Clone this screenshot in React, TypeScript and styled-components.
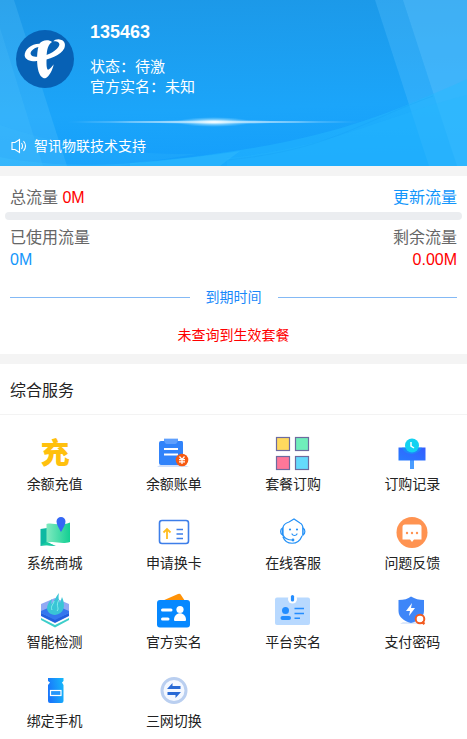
import React from "react";
import styled, { createGlobalStyle } from "styled-components";

const GlobalStyle = createGlobalStyle`
  * { box-sizing: border-box; }
  body {
    margin: 0;
    background: #fff;
    color: #222;
    font-family: "Liberation Sans", "Noto Sans CJK SC", sans-serif;
    font-size: 14px;
    line-height: 20px;
  }
  button {
    border: 0;
    padding: 0;
    background: none;
    color: inherit;
    font: inherit;
    cursor: pointer;
  }
  h1, h2, p { margin: 0; }
`;

const Page = styled.main`
  overflow-x: hidden;
`;

const Header = styled.header`
  position: relative;
  display: flex;
  flex-direction: column;
  gap: 39px;
  padding: 22px 16px 10px 11px;
  color: #fff;
  background: #1b9ff2;
`;

const Backdrop = styled.svg`
  position: absolute;
  inset: 0;
  width: 100%;
  height: 100%;
`;

const Profile = styled.section`
  position: relative;
  display: flex;
  align-items: flex-start;
  gap: 16px;
  padding-left: 5px;
`;

const CarrierLogo = styled.svg`
  width: 58px;
  height: 58px;
  flex: none;
  margin-top: 8px;
`;

const CardNumber = styled.h1`
  margin-bottom: 15px;
  font-size: 18px;
  line-height: 20px;
`;

const StatusLine = styled.p`
  font-size: 15px;
  line-height: 20px;
`;

const Notice = styled.p`
  position: relative;
  display: flex;
  align-items: center;
  gap: 7px;
`;

const Panel = styled.section`
  border-top: 10px solid #f4f4f4;
`;

const Usage = styled.div`
  padding: 11px 5px 9px;
`;

const UsageRow = styled.div`
  display: flex;
  justify-content: space-between;
  padding: 0 5px;
  color: #666;
  font-size: 16px;
  line-height: 22px;
`;

const Amount = styled.span<{ $tone: "red" | "blue" }>`
  color: ${(p) => (p.$tone === "red" ? "#ff0000" : "#1296fb")};
`;

const RefreshButton = styled.button`
  color: #1296fb;
`;

const Track = styled.div`
  height: 8px;
  margin: 3px 0 7px;
  border-radius: 4px;
  background: #ebedf0;
`;

const Divider = styled.div`
  display: flex;
  align-items: center;
  gap: 16px;
  margin: 16px 5px 18px;
  color: #1989fa;

  &::before,
  &::after {
    content: "";
    flex: 1;
    height: 1px;
    background: #84b9f5;
  }
`;

const EmptyPlan = styled.p`
  color: #ff0000;
  text-align: center;
`;

const PanelTitle = styled.h2`
  padding: 16px 10px 12px;
  border-bottom: 1px solid #f3f3f3;
  font-size: 16px;
  font-weight: 400;
  line-height: 22px;
`;

const ServiceGrid = styled.div`
  display: grid;
  grid-template-columns: repeat(4, 1fr);
  row-gap: 20px;
  margin: 0 -5px;
  padding: 20px 0 8px;
`;

const ServiceButton = styled.button`
  display: flex;
  flex-direction: column;
  align-items: center;
  gap: 3px;
`;

const Icon = styled.svg`
  width: 36px;
  height: 36px;
  overflow: visible;
`;

const services: { label: string; art: React.ReactNode }[] = [
  {
    label: "余额充值",
    art: (
      <text x="18" y="29" textAnchor="middle" fontSize="29" fontWeight="900" fill="#ffc00d" fontFamily="Noto Sans CJK SC, sans-serif">
        充
      </text>
    ),
  },
  {
    label: "余额账单",
    art: (
      <>
        <path d="M4 30H28L33 32H1Z" fill="#cfdffa" />
        <path d="M5 6H8V4H22V6H26Q27 6 27 8V30H5Q3 30 3 28V8Q3 6 5 6Z" fill="#3183fa" />
        <path d="M8 5C9 10 11 9 15 9S21 10 22 5V3H8Z" fill="#8cbcff" opacity=".5" />
        <path d="M8 14H22M8 19.5H22" stroke="#fff" strokeWidth="2" />
        <circle cx="26" cy="25" r="6.3" fill="#f65a13" />
        <path d="M23.5 21.5 26 24.5 28.5 21.5M23 24.7H29M23 26.8H29M26 24.5V29" fill="none" stroke="#fff" strokeWidth="1.2" />
      </>
    ),
  },
  {
    label: "套餐订购",
    art: (
      <g stroke="#6d6b9f" strokeWidth="1.2">
        <rect x="1.5" y="2.5" width="13" height="13" fill="#ffda5e" />
        <rect x="20.5" y="2.5" width="13" height="13" fill="#70eebb" />
        <rect x="1.5" y="21.5" width="13" height="13" fill="#ff7799" />
        <rect x="20.5" y="21.5" width="13" height="13" fill="#64dafc" />
      </g>
    ),
  },
  {
    label: "订购记录",
    art: (
      <>
        <defs>
          <linearGradient id="board" x1="0" y1="1" x2="1" y2="0">
            <stop stopColor="#267cff" />
            <stop offset="1" stopColor="#365dff" />
          </linearGradient>
        </defs>
        <path d="M16 25H20V34H16Z" fill="#4a9cff" />
        <path d="M4.5 12.5H31.5V25.5H4.5Z" fill="url(#board)" />
        <path d="M8 12.5H28C27 16 22 19 18 19S9 17 8 12.5Z" fill="#1598f7" opacity=".6" />
        <circle cx="18" cy="10.5" r="7" fill="#13d2f1" />
        <path d="M17 7V11L20 13" fill="none" stroke="#fff" strokeWidth="1.5" />
      </>
    ),
  },
  {
    label: "系统商城",
    art: (
      <>
        <defs>
          <linearGradient id="mapFront">
            <stop stopColor="#80eac0" />
            <stop offset="1" stopColor="#13cf93" />
          </linearGradient>
        </defs>
        <path d="M3.5 15 10 14V28L18 32 10 31 3.5 32Z" fill="#0db9a2" />
        <path d="M9.5 10C16 8 22 13 33 8.5V28C23 31 18 26 9.5 29Z" fill="url(#mapFront)" />
        <path d="M9.5 28 19 32 4 31Z" fill="#18cba0" />
        <path d="M24 18C22 14 19.5 11 19.5 7.5A4.5 4.5 0 0 1 28.5 7.5C28.5 11 26 14 24 18Z" fill="#3567f5" />
      </>
    ),
  },
  {
    label: "申请换卡",
    art: (
      <>
        <rect x="3.5" y="6.5" width="29" height="23" rx="2.5" fill="#fff" stroke="#3d7ee9" strokeWidth="1.6" />
        <path d="M11 25V15M7.5 18.5 11 15 14.500 18.5" fill="none" stroke="#ffbd20" strokeWidth="1.8" />
        <path d="M20.5 15.5H27M20.5 20H27M20.5 24.5H27" stroke="#3d7ee9" strokeWidth="1.6" />
      </>
    ),
  },
  {
    label: "在线客服",
    art: (
      <g fill="none" stroke="#2491f7" strokeWidth="1.2" strokeLinecap="round">
        <path d="M8 14C8 11 11 9 14 8L19 5 25 9C27 10 28 12 28 15V21M8 14V21" />
        <path d="M7.500 14C5 15 5 20 7.5 21ZM28 14C30.5 15 30.5 20 28 21Z" fill="#d9edff" />
        <path d="M8 23C11 31 23 32 27 22M8 21C10 25 14 26 17 26" />
        <path d="M17 20C18 22 21 22 22 20" />
        <circle cx="15" cy="15.5" r=".5" fill="#2491f7" />
        <circle cx="22" cy="15.5" r=".5" fill="#2491f7" />
        <circle cx="18" cy="26" r=".8" fill="#2491f7" />
      </g>
    ),
  },
  {
    label: "问题反馈",
    art: (
      <>
        <circle cx="18" cy="18.5" r="15.5" fill="#ff9351" />
        <path d="M11 10.5H25Q27.5 10.5 27.5 13V25.5H20L18 28 16 25.5H8.5V13Q8.5 10.5 11 10.5Z" fill="#fff" />
        <g fill="#ff9351">
          <circle cx="13" cy="19" r="1.2" />
          <circle cx="18" cy="19" r="1.2" />
          <circle cx="23" cy="19" r="1.2" />
        </g>
      </>
    ),
  },
  {
    label: "智能检测",
    art: (
      <>
        <path d="M4 25 18 32 32 25V27L18 34.5 4 27Z" fill="#3dceca" />
        <path d="M4 19H32V23L18 30 4 23Z" fill="#2360de" />
        <path d="M4 11 18 5 32 11V20L18 26 4 20Z" fill="#92a9f3" />
        <path d="M4 18 18 12 32 18V20L18 27 4 20Z" fill="#3577ee" />
        <path d="M18 22C8 21 8 12 15 6L14 11C17 9 18 5 22 0C21 5 22 7 23 10L25 4C29 13 27 21 18 22Z" fill="#39c5d6" />
        <path d="M15 17C13 13 17 11 17 8M20 18C23 15 18 13 22 7" fill="none" stroke="#87edec" strokeWidth="1" />
      </>
    ),
  },
  {
    label: "官方实名",
    art: (
      <>
        <path d="M6 8 22 1Q24 0 25 2L29 8Z" fill="#ff9207" />
        <rect x="1" y="7" width="33" height="27.5" rx="3" fill="#0688ff" />
        <path d="M6.5 17H15M6.5 26H12" stroke="#fff" strokeWidth="3" strokeLinecap="round" />
        <circle cx="24" cy="16.5" r="3.6" fill="#fff" />
        <path d="M18 27C18 18 30 18 30 27Q30 28 29 28H19Q18 28 18 27Z" fill="#fff" />
      </>
    ),
  },
  {
    label: "平台实名",
    art: (
      <>
        <rect x="0" y="4.5" width="35" height="27.5" rx="2" fill="#b8d9ff" />
        <circle cx="17.5" cy="6" r="4.5" fill="#fff" />
        <path d="M17.5 3.5V7" stroke="#238dff" strokeWidth="3.2" strokeLinecap="round" />
        <circle cx="10.5" cy="17.5" r="3.5" fill="#238dff" />
        <rect x="5.5" y="23" width="10.5" height="4" rx="2" fill="#238dff" />
        <path d="M19.5 15.5H29M19.5 20.5H29M19.5 25.3H25" stroke="#238dff" strokeWidth="1.6" />
      </>
    ),
  },
  {
    label: "支付密码",
    art: (
      <>
        <path d="M9 29H21L26 31H6Z" fill="#dce8fb" />
        <path d="M4.5 7C10 7 14 6 17 3.5C21 6 25 7 30 7V18C30 24 24 28 17 30C10 28 4.5 24 4.5 18Z" fill="#3e86f8" />
        <path d="M18 10 12 18H16L15 23 21 15H17Z" fill="#fff" />
        <circle cx="26" cy="26" r="4.3" fill="#fff" stroke="#f25b20" strokeWidth="2" />
        <path d="M28 29 30.5 31" stroke="#f25b20" strokeWidth="2.5" />
      </>
    ),
  },
  {
    label: "绑定手机",
    art: (
      <>
        <defs>
          <linearGradient id="phone" x1="0" y1="0.3" x2="1" y2="0">
            <stop stopColor="#1978fb" />
            <stop offset="1" stopColor="#16bafa" />
          </linearGradient>
        </defs>
        <path d="M11 6H26.5V9L25 10.500L26.5 13V29Q26.5 31 24.5 31H13Q11 31 11 29V13L13 10.5L11 9Z" fill="url(#phone)" />
        <rect x="13.5" y="18.5" width="10.5" height="5" fill="#2596fb" stroke="#fff" strokeWidth="1.2" />
      </>
    ),
  },
  {
    label: "三网切换",
    art: (
      <>
        <circle cx="18" cy="18.5" r="12" fill="#f4f8ff" stroke="#bacff0" strokeWidth="3" />
        <path d="M24.5 14V17H11L16.5 11V14ZM11.5 20H25L19.5 26V23H11.5Z" fill="#2869d5" />
      </>
    ),
  },
];

function HeaderBackdrop() {
  return (
    <Backdrop viewBox="0 0 467 166" preserveAspectRatio="none" aria-hidden="true">
      <defs>
        <linearGradient id="sky" x1="0" y1="0" x2="0.1" y2="1">
          <stop stopColor="#1c98e7" />
          <stop offset=".7" stopColor="#1ba5fa" />
          <stop offset="1" stopColor="#159ffb" />
        </linearGradient>
        <linearGradient id="streak">
          <stop stopColor="#fff" stopOpacity="0" />
          <stop offset=".5" stopColor="#fff" stopOpacity=".8" />
          <stop offset="1" stopColor="#fff" stopOpacity="0" />
        </linearGradient>
        <radialGradient id="flare">
          <stop stopColor="#fff" />
          <stop offset=".35" stopColor="#d9f4ff" stopOpacity=".7" />
          <stop offset="1" stopColor="#8fd9ff" stopOpacity="0" />
        </radialGradient>
      </defs>
      <rect width="467" height="166" fill="url(#sky)" />
      <path d="M0 0H14L67 166H0Z" fill="#72d0ff" opacity=".2" />
      <path d="M0 28 43 166H0Z" fill="#74d4ff" opacity=".12" />
      <path d="M375 0H467V166H429Z" fill="#60c5ff" opacity=".28" />
      <path d="M403 0H467V166H457Z" fill="#6bcaff" opacity=".28" />
      <path d="M227 152C330 137 385 116 467 79V166H227Z" fill="#25baff" opacity=".45" />
      <path d="M227 158C330 148 382 117 467 95V166H227Z" fill="#28b8ff" opacity=".28" />
      <path d="M130 163C165 160 195 157 227 152V166H130Z" fill="#25baff" opacity=".45" />
      <path d="M227 160C330 150 360 122 433 96" fill="none" stroke="#1193ec" strokeOpacity=".18" />
      <path d="M0 125C65 147 115 154 197 154L120 166H0Z" fill="#42c2ff" opacity=".15" />
      <path d="M0 157C70 171 150 164 240 151L220 166H0Z" fill="#45c8ff" opacity=".25" />
      <ellipse cx="214" cy="122" rx="148" ry="1.2" fill="url(#streak)" />
      <ellipse cx="214" cy="122" rx="38" ry="5" fill="url(#flare)" />
    </Backdrop>
  );
}

export default function App() {
  return (
    <>
      <GlobalStyle />
      <Page>
        <Header>
          <HeaderBackdrop />
          <Profile>
            <CarrierLogo viewBox="0 0 174 174" aria-hidden="true">
              <circle cx="87" cy="87" r="87" fill="#0761b5" />
              <g fill="#fff">
                <path d="M108 36C100 28 78 28 70 42C62 60 62 95 66 118C70 138 80 146 88 145C100 140 110 120 113 103C108 110 101 119 96 119C91 116 91 100 92 80C92 60 97 42 108 36Z" />
                <path d="M76 42C50 38 25 58 26 77C28 90 45 95 66 93C100 91 135 75 145 55C150 42 146 30 128 28C120 28 115 30 112 34C123 33 131 37 130 45C125 60 100 76 70 80C52 82 42 76 44 68C47 58 60 50 76 50Z" />
              </g>
            </CarrierLogo>
            <div>
              <CardNumber>135463</CardNumber>
              <StatusLine>状态：待激</StatusLine>
              <StatusLine>官方实名：未知</StatusLine>
            </div>
          </Profile>
          <Notice>
            <svg width="16" height="16" viewBox="0 0 16 16" fill="none" stroke="#fff" strokeWidth="1.1" aria-hidden="true">
              <path d="M1 4.5H4L8.5 1.5V14.5L4 11.5H1Z" />
              <path d="M10.5 5Q12.5 8 10.5 11M12.5 3Q16.5 8 12.5 13" />
            </svg>
            智讯物联技术支持
          </Notice>
        </Header>

        <Panel>
          <Usage>
            <UsageRow>
              <span>
                总流量 <Amount $tone="red">0M</Amount>
              </span>
              <RefreshButton type="button">更新流量</RefreshButton>
            </UsageRow>
            <Track role="progressbar" aria-label="已使用流量" aria-valuenow={0} aria-valuemin={0} aria-valuemax={100} />
            <UsageRow>
              <span>已使用流量</span>
              <span>剩余流量</span>
            </UsageRow>
            <UsageRow>
              <Amount $tone="blue">0M</Amount>
              <Amount $tone="red">0.00M</Amount>
            </UsageRow>
            <Divider>到期时间</Divider>
            <EmptyPlan>未查询到生效套餐</EmptyPlan>
          </Usage>
        </Panel>

        <Panel>
          <PanelTitle>综合服务</PanelTitle>
          <ServiceGrid>
            {services.map(({ label, art }) => (
              <ServiceButton key={label} type="button">
                <Icon viewBox="0 0 36 36" aria-hidden="true">
                  {art}
                </Icon>
                {label}
              </ServiceButton>
            ))}
          </ServiceGrid>
        </Panel>
      </Page>
    </>
  );
}
